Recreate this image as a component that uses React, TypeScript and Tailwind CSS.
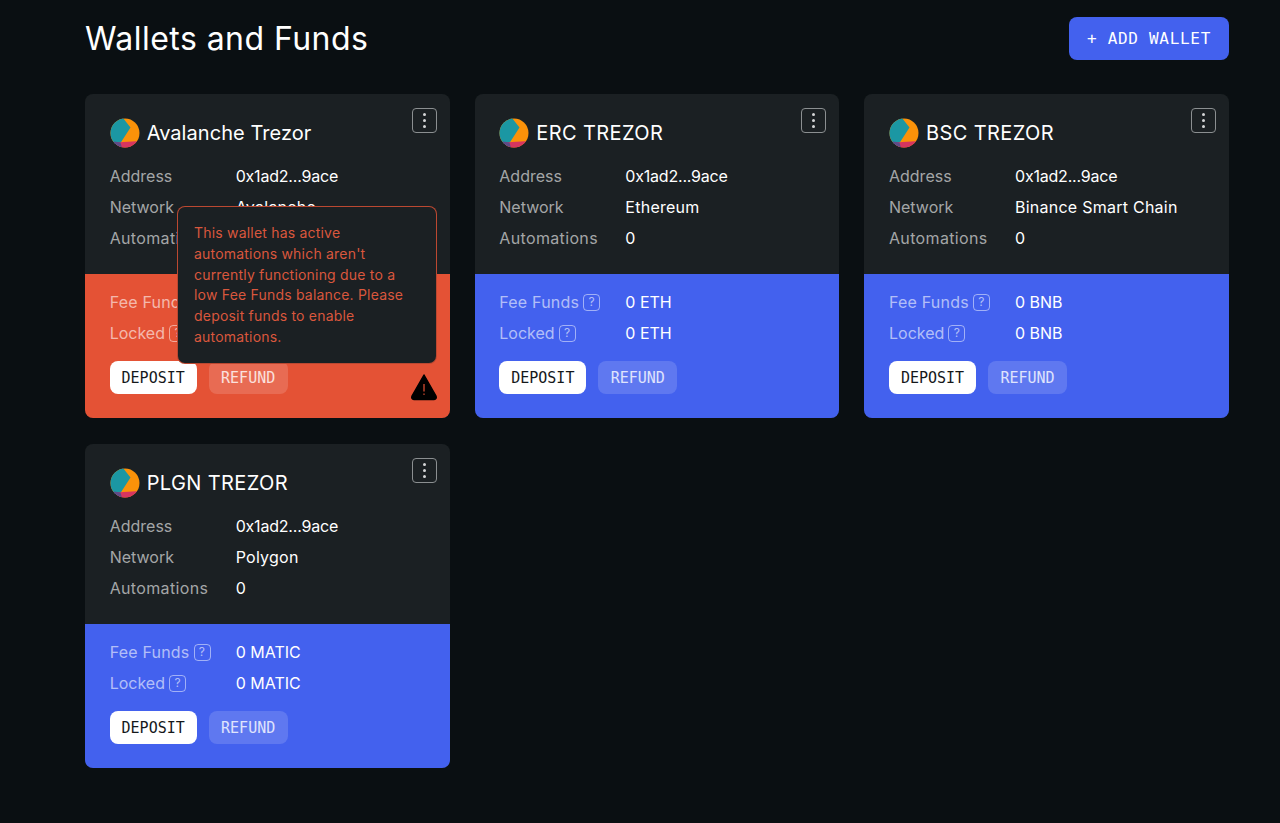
import React from 'react';

type Wallet = {
  name: string;
  network: string;
  token: string;
  alert?: boolean;
};

const wallets: Wallet[] = [
  { name: 'Avalanche Trezor', network: 'Avalanche', token: 'AVAX', alert: true },
  { name: 'ERC TREZOR', network: 'Ethereum', token: 'ETH' },
  { name: 'BSC TREZOR', network: 'Binance Smart Chain', token: 'BNB' },
  { name: 'PLGN TREZOR', network: 'Polygon', token: 'MATIC' },
];

const mono = "font-['DejaVu_Sans_Mono',monospace]";

const WalletLogo = () => (
  <svg width="30" height="30" viewBox="0 0 30 30" className="shrink-0">
    <defs>
      <clipPath id="logo-clip">
        <circle cx="15" cy="15" r="14.5" />
      </clipPath>
    </defs>
    <g clipPath="url(#logo-clip)">
      <rect width="30" height="30" fill="#fb9209" />
      <path d="M0 0 H13 L20.5 9.5 L10.5 25 L8 30 H0 Z" fill="#1b97a3" />
      <path d="M6 24.5 L30 23 V30 H6 Z" fill="#d7355f" />
      <path d="M4 23.5 L10.5 24.5 L12 30 H4 Z" fill="#5f4a86" />
    </g>
  </svg>
);

const AlertIcon = () => (
  <svg viewBox="0 0 28 28" className="absolute bottom-[17px] right-[12px] h-[28px] w-[28px]">
    <path
      d="M14 2 L26 23 Q27 26 24 26.5 H4 Q1 26 2 23 Z"
      fill="#000"
      stroke="#000"
      strokeWidth="1.5"
      strokeLinejoin="round"
    />
    <rect x="13.4" y="11" width="1.2" height="7.5" fill="#e45235" />
    <rect x="13.4" y="20.5" width="1.2" height="1.4" fill="#e45235" />
  </svg>
);

const HelpBadge = () => (
  <span className="inline-flex h-[17px] w-[17px] items-center justify-center rounded-[4px] border border-white/50 text-[12px] leading-none text-white/60">
    ?
  </span>
);

const WalletCard = ({ wallet }: { wallet: Wallet }) => (
  <div className="relative flex h-[324px] flex-col rounded-lg bg-[#1b2023]">
    <div className="relative h-[180px] px-[24.67px] pt-[24px]">
      <button className="absolute right-[13px] top-[14px] flex h-[25px] w-[25px] items-center justify-center rounded-[4px] border border-[#8b8f91]">
        <span className="flex flex-col gap-[3px]">
          <span className="h-[3px] w-[3px] rounded-full bg-[#d5d6d7]" />
          <span className="h-[3px] w-[3px] rounded-full bg-[#d5d6d7]" />
          <span className="h-[3px] w-[3px] rounded-full bg-[#d5d6d7]" />
        </span>
      </button>
      <div className="flex h-[30px] items-center gap-[7px]">
        <WalletLogo />
        <h2
          className={
            wallet.alert
              ? 'text-[20px] font-normal tracking-[0.05px] text-white'
              : 'text-[20px] font-normal tracking-[0.4px] text-white'
          }
        >
          {wallet.name}
        </h2>
      </div>
      <dl className="mt-[16.5px] grid grid-cols-[126px_1fr] gap-y-[9px] text-[16px] leading-[22px]">
        <dt className="text-[#a4a6a7]">Address</dt>
        <dd className="tracking-[-0.2px] text-white">0x1ad2...9ace</dd>
        <dt className="text-[#a4a6a7]">Network</dt>
        <dd className="tracking-[0.25px] text-white">{wallet.network}</dd>
        <dt className="tracking-[0.35px] text-[#a4a6a7]">Automations</dt>
        <dd className="text-white">0</dd>
      </dl>
    </div>

    <div
      className={
        wallet.alert
          ? 'relative h-[144px] rounded-b-lg bg-[#e45235] px-[24.67px] pt-[17px]'
          : 'relative h-[144px] rounded-b-lg bg-[#4361ee] px-[24.67px] pt-[17px]'
      }
    >
      <dl className="grid grid-cols-[126px_1fr] gap-y-[9px] text-[16px] leading-[22px]">
        <dt className="flex items-center gap-[4px] tracking-[0.2px] text-white/60">
          Fee Funds <HelpBadge />
        </dt>
        <dd className="text-white">0 {wallet.token}</dd>
        <dt className="flex items-center gap-[4px] text-white/60">
          Locked <HelpBadge />
        </dt>
        <dd className="text-white">0 {wallet.token}</dd>
      </dl>
      <div className={`mt-[17px] flex gap-3 text-[15px] ${mono}`}>
        <button className="h-[33px] w-[87px] rounded-lg bg-white pt-[1px] text-[#15181a]">DEPOSIT</button>
        <button className="h-[33px] w-[79px] rounded-lg bg-white/15 pt-[1px] text-white/80">REFUND</button>
      </div>
      {wallet.alert && <AlertIcon />}
    </div>

    {wallet.alert && (
      <div className="absolute left-[92px] top-[112px] h-[158px] w-[260px] rounded-lg border border-[#e45235]/80 bg-[#1b2023] px-4 py-[16px] text-[14px] leading-[20.8px] tracking-[0.2px] text-[#d9573d]">
        This wallet has active automations which aren't currently functioning due to a low Fee
        Funds balance. Please deposit funds to enable automations.
      </div>
    )}
  </div>
);

export default function App() {
  return (
    <div className="min-h-[823px] bg-[#0a0f12] pl-[85px] pr-[51px] pt-[17px] font-['Inter',sans-serif]">
      <header className="mb-[34px] flex h-[43px] items-center justify-between">
        <h1 className="text-[32px] font-normal tracking-[0.45px] text-white">Wallets and Funds</h1>
        <button className={`h-[43px] w-[160px] rounded-lg bg-[#4361ee] pt-[1px] text-[16px] tracking-[0.7px] text-white ${mono}`}>
          + ADD WALLET
        </button>
      </header>
      <div className="grid grid-cols-3 gap-x-[25px] gap-y-[26px]">
        {wallets.map((w) => (
          <WalletCard key={w.name} wallet={w} />
        ))}
      </div>
    </div>
  );
}
